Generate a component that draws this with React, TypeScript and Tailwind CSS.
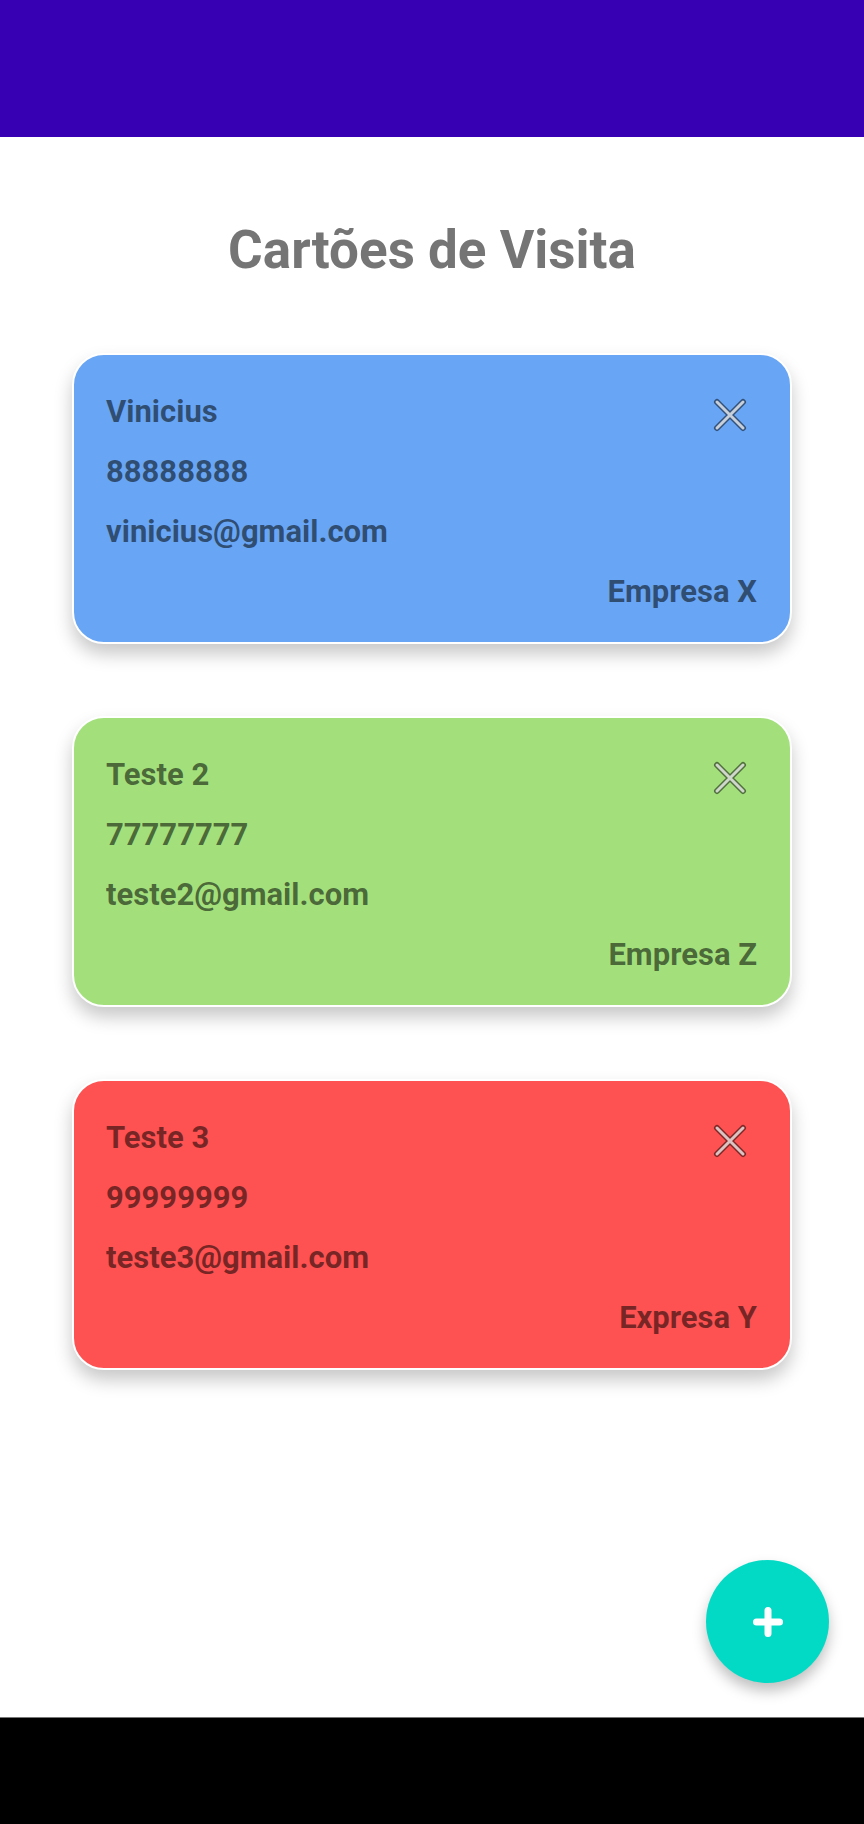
import React from "react";

type Card = { name: string; phone: string; email: string; company: string; bg: string };

const cards: Card[] = [
  { name: "Vinicius", phone: "88888888", email: "vinicius@gmail.com", company: "Empresa X", bg: "bg-[#68a5f4]" },
  { name: "Teste 2", phone: "77777777", email: "teste2@gmail.com", company: "Empresa Z", bg: "bg-[#a3e07c]" },
  { name: "Teste 3", phone: "99999999", email: "teste3@gmail.com", company: "Expresa Y", bg: "bg-[#fe5151]" },
];

function CloseIcon() {
  return (
    <svg width="34" height="34" viewBox="0 0 34 34" className="block">
      <g strokeLinecap="round">
        <path d="M4 4 L30 30 M30 4 L4 30" stroke="rgba(0,0,0,0.5)" strokeWidth="6" />
        <path d="M4 4 L30 30 M30 4 L4 30" stroke="rgba(255,255,255,0.72)" strokeWidth="3" />
      </g>
    </svg>
  );
}

function BusinessCard({ c }: { c: Card }) {
  return (
    <div
      className={`${c.bg} h-[291px] rounded-[32px] border-2 border-white shadow-[0_10px_18px_rgba(0,0,0,0.22)] pl-[32px] pr-[33px] pt-[27px] text-[31px] leading-[60px] font-bold text-black/55`}
    >
      <div className="flex justify-between items-start h-[60px]">
        <div>{c.name}</div>
        <div className="pt-[16px] pr-[10px]">
          <CloseIcon />
        </div>
      </div>
      <div>{c.phone}</div>
      <div>{c.email}</div>
      <div className="text-right">{c.company}</div>
    </div>
  );
}

export default function App() {
  return (
    <div className="w-[864px] h-[1824px] flex flex-col bg-white" style={{ fontFamily: "Roboto, 'Noto Sans', sans-serif" }}>
      <div className="h-[137px] bg-[#3700b3] shrink-0" />
      <div className="flex-1 relative">
        <h1 className="mt-[81px] text-center text-[53px] leading-[64px] font-bold text-[#757575]">Cartões de Visita</h1>
        <div className="mt-[71px] mx-[72px] flex flex-col gap-[72px]">
          {cards.map((c) => (
            <BusinessCard key={c.name} c={c} />
          ))}
        </div>
        <button className="absolute left-[706px] top-[1423px] w-[123px] h-[123px] rounded-full bg-[#03dac5] shadow-[0_8px_14px_rgba(0,0,0,0.25)] flex items-center justify-center">
          <svg width="30" height="30" viewBox="0 0 30 30">
            <path d="M15 3.5 V26.5 M3.5 15 H26.5" stroke="white" strokeWidth="7" strokeLinecap="round" />
          </svg>
        </button>
      </div>
      <div className="h-[107px] bg-black border-t border-[#777] shrink-0" />
    </div>
  );
}
